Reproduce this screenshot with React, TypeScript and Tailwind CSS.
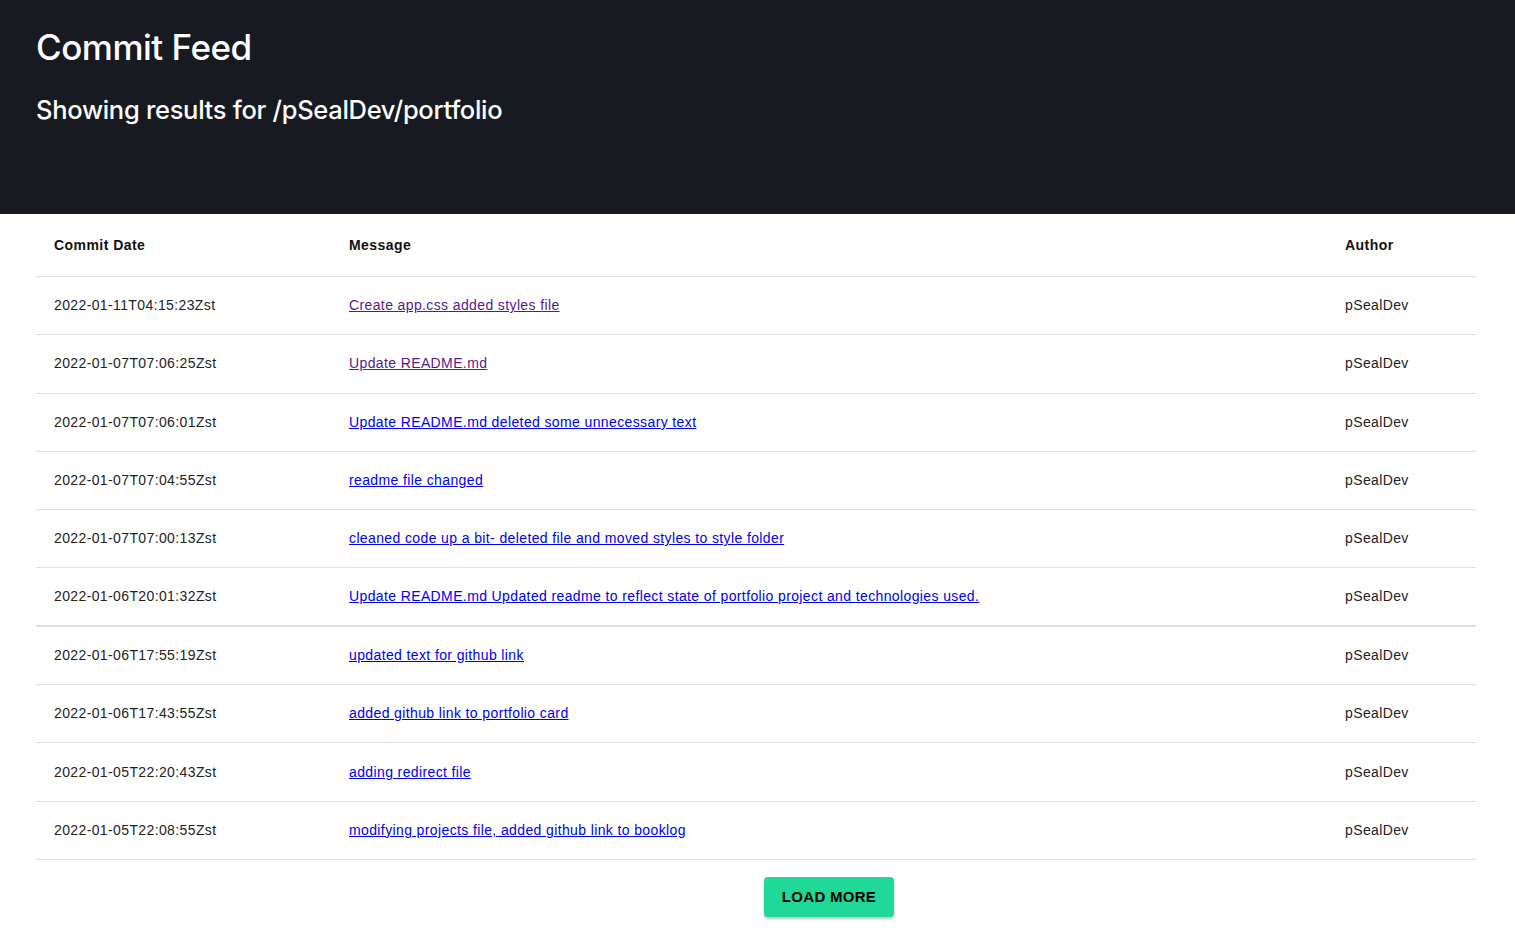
const commits = [
  { date: "2022-01-11T04:15:23Zst", message: "Create app.css added styles file", visited: true },
  { date: "2022-01-07T07:06:25Zst", message: "Update README.md", visited: true },
  { date: "2022-01-07T07:06:01Zst", message: "Update README.md deleted some unnecessary text" },
  { date: "2022-01-07T07:04:55Zst", message: "readme file changed" },
  { date: "2022-01-07T07:00:13Zst", message: "cleaned code up a bit- deleted file and moved styles to style folder" },
  { date: "2022-01-06T20:01:32Zst", message: "Update README.md Updated readme to reflect state of portfolio project and technologies used." },
  { date: "2022-01-06T17:55:19Zst", message: "updated text for github link" },
  { date: "2022-01-06T17:43:55Zst", message: "added github link to portfolio card" },
  { date: "2022-01-05T22:20:43Zst", message: "adding redirect file" },
  { date: "2022-01-05T22:08:55Zst", message: "modifying projects file, added github link to booklog" },
];

const App = () => {
  return (
    <div className="min-h-screen bg-white">
      <header className="bg-[#171a21] h-[214px] px-9 pt-[25px] text-white font-['Inter',sans-serif]">
        <h1 className="text-[35px] leading-[44px] font-medium tracking-[-0.5px]">Commit Feed</h1>
        <h2 className="mt-[24px] text-[25.5px] leading-[34px] font-medium tracking-[-0.3px]">
          Showing results for /pSealDev/portfolio
        </h2>
      </header>

      <div className="pl-9 pr-[39px] font-['Liberation_Sans',Arial,sans-serif] text-[14px] text-[#222] tracking-[0.38px]">
        <div className="flex h-[63px] items-center border-b border-[#e0e0e0] font-bold text-[#111] tracking-[0.45px] pt-[1px]">
          <div className="w-[313px] pl-[18px]">Commit Date</div>
          <div className="flex-1">Message</div>
          <div className="w-[131px]">Author</div>
        </div>
        {commits.map((c, i) => (
          <div
            key={i}
            className={`flex h-[58.3px] items-center border-b border-[#e0e0e0] ${i === 5 ? "border-b-2" : ""}`}
          >
            <div className="w-[313px] pl-[18px]">{c.date}</div>
            <div className="flex-1">
              <a
                href="#"
                className={`underline ${c.visited ? "text-[#551a8b]" : "text-[#0000ee]"}`}
              >
                {c.message}
              </a>
            </div>
            <div className="w-[131px]">pSealDev</div>
          </div>
        ))}
        <div className="flex pt-[17px] pl-[728px]">
          <button className="h-[40px] w-[130px] rounded bg-[#20d898] font-bold text-[15px] tracking-[0.3px] text-black shadow-[0_2px_3px_rgba(0,0,0,0.25)]">
            LOAD MORE
          </button>
        </div>
      </div>
    </div>
  );
};

export default App;
